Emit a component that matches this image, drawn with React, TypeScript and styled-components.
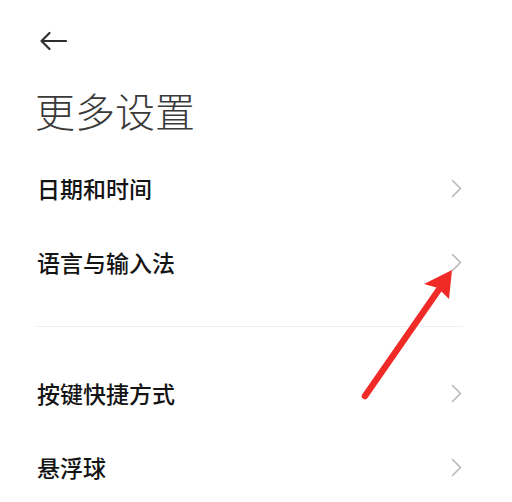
import styled, { createGlobalStyle } from "styled-components";

const GlobalStyle = createGlobalStyle`
  html, body {
    margin: 0;
    padding: 0;
    background: #ffffff;
  }
  body {
    font-family: "Noto Sans CJK SC", "Noto Sans", sans-serif;
  }
`;

type SettingItem = {
  label: string;
};

const groups: SettingItem[][] = [
  [{ label: "日期和时间" }, { label: "语言与输入法" }],
  [{ label: "按键快捷方式" }, { label: "悬浮球" }],
];

function BackArrow() {
  return (
    <svg width="28" height="20" viewBox="0 0 28 20" fill="none">
      <path
        d="M27 10H2.5M10.5 2L2.5 10L10.5 18"
        stroke="#2e2e2e"
        strokeWidth="2.2"
        strokeLinecap="round"
        strokeLinejoin="round"
      />
    </svg>
  );
}

function Chevron() {
  return (
    <svg width="11" height="19" viewBox="0 0 11 19" fill="none">
      <path
        d="M1.5 1.5L9.5 9.5L1.5 17.5"
        stroke="#b8b8b8"
        strokeWidth="1.6"
        strokeLinecap="round"
        strokeLinejoin="round"
      />
    </svg>
  );
}

function App() {
  return (
    <>
      <GlobalStyle />
      <Page>
        <Header>
          <BackArrow />
        </Header>
        <Title>更多设置</Title>
        <List>
          {groups.map((group, gi) => (
            <Group key={gi}>
              {gi > 0 && <Divider />}
              {group.map((item) => (
                <Row key={item.label}>
                  <Label>{item.label}</Label>
                  <Chevron />
                </Row>
              ))}
            </Group>
          ))}
        </List>
        <Pointer width="512" height="502" viewBox="0 0 512 502">
          <line
            x1="365"
            y1="396"
            x2="440"
            y2="288"
            stroke="#f02a26"
            strokeWidth="6.5"
            strokeLinecap="round"
          />
          <polygon points="452,270 424,284 438,288 449,299" fill="#f02a26" />
        </Pointer>
      </Page>
    </>
  );
}

const Page = styled.div`
  position: relative;
  width: 512px;
  height: 502px;
  overflow: hidden;
  background: #ffffff;
`;

const Header = styled.div`
  height: 82px;
  display: flex;
  align-items: center;
  padding-left: 39px;
`;

const Title = styled.h1`
  margin: 0;
  padding-left: 35px;
  height: 56px;
  line-height: 56px;
  font-size: 40px;
  font-weight: 300;
  color: #3a3a3a;
`;

const List = styled.div`
  margin-top: 13px;
  display: flex;
  flex-direction: column;
`;

const Group = styled.div`
  display: flex;
  flex-direction: column;
`;

const Divider = styled.div`
  height: 1px;
  margin: 27px 49px 29px 36px;
  background: #f0f0f0;
`;

const Row = styled.div`
  height: 74px;
  display: flex;
  align-items: center;
  justify-content: space-between;
  padding: 0 50px 0 37px;
`;

const Label = styled.span`
  font-size: 23px;
  font-weight: 500;
  color: #141414;
`;

const Pointer = styled.svg`
  position: absolute;
  left: 0;
  top: 0;
  pointer-events: none;
`;

export default App;
